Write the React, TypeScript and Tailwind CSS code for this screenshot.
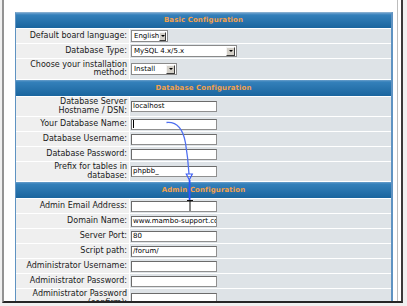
import { ReactNode } from 'react';

const Header = ({ title, tall }: { title: string; tall?: boolean }) => (
  <div
    className={`col-span-2 flex items-center justify-center bg-[linear-gradient(180deg,#6a9fcc_0px,#3480ba_2px,#1a659e_100%)] font-bold text-[7px] tracking-[0.1px] text-[#f2a04c] ${
      tall ? 'h-[16px]' : 'h-[15px]'
    }`}
  >
    {title}
  </div>
);

const Row = ({ label, children, h = 'h-[14px]' }: { label: ReactNode; children: ReactNode; h?: string }) => (
  <>
    <div className={`bg-[#efefef] flex items-center justify-end pr-[2px] text-right text-[8px] leading-[8.5px] text-[#1a1a1a] ${h}`}>
      <span>{label}</span>
    </div>
    <div className="bg-[#dee3e7] flex items-center pl-px">{children}</div>
  </>
);

const TextBox = ({ value, caret }: { value?: string; caret?: boolean }) => (
  <div className="w-[86px] h-[11px] bg-white border border-[#6b6b6b] border-r-[#8f8f8f] border-b-[#8f8f8f] flex items-center pl-px overflow-hidden whitespace-nowrap text-[7px] text-black">
    {caret && <span className="w-px h-[8px] bg-black" />}
    {value}
  </div>
);

const Select = ({ value, w }: { value: string; w: string }) => (
  <div className={`h-[12px] bg-white border border-[#8a8a8a] flex items-center ${w}`}>
    <span className="flex-1 pl-[2px] text-[7px] text-black whitespace-nowrap">{value}</span>
    <span className="w-[9px] h-[9px] mr-px bg-[#d4d0c8] border border-t-[#f4f4f4] border-l-[#f4f4f4] border-r-[#3c3c3c] border-b-[#3c3c3c] flex items-center justify-center">
      <span className="w-0 h-0 border-l-[2px] border-r-[2px] border-t-[2px] border-l-transparent border-r-transparent border-t-black" />
    </span>
  </div>
);

export default function App() {
  return (
    <div className="relative w-[407px] h-[306px] overflow-hidden bg-[#f0f0f0] font-['DejaVu_Sans',Verdana,sans-serif]">
      <div className="ml-[2px] w-[401px] h-[303px] flex bg-white border-l-2 border-l-[#939393] border-r-2 border-r-[#3a3a3a] border-b-2 border-b-[#262626]">
        <div className="flex-1 pl-[11px] pt-[12px] overflow-hidden">
          <div className="w-[378px] border-t border-t-[#85aed0] border-l border-l-[#5f93c2] border-r-2 border-r-[#5f93c2] bg-white grid grid-cols-[113px_1fr] gap-px">
            <Header title="Basic Configuration" />
            <Row label="Default board language:">
              <Select value="English" w="w-[37px]" />
            </Row>
            <Row label="Database Type:">
              <Select value="MySQL 4.x/5.x" w="w-[106px]" />
            </Row>
            <Row label={<>Choose your installation<br />method:</>} h="h-[20px]">
              <Select value="Install" w="w-[46px]" />
            </Row>

            <Header title="Database Configuration" tall />
            <Row label={<>Database Server<br />Hostname / DSN:</>} h="h-[19px]">
              <TextBox value="localhost" />
            </Row>
            <Row label="Your Database Name:">
              <TextBox caret />
            </Row>
            <Row label="Database Username:">
              <TextBox />
            </Row>
            <Row label="Database Password:">
              <TextBox />
            </Row>
            <Row label={<>Prefix for tables in<br />database:</>} h="h-[19px]">
              <TextBox value="phpbb_" />
            </Row>

            <Header title="Admin Configuration" tall />
            <Row label="Admin Email Address:">
              <TextBox />
            </Row>
            <Row label="Domain Name:">
              <TextBox value="www.mambo-support.com" />
            </Row>
            <Row label="Server Port:">
              <TextBox value="80" />
            </Row>
            <Row label="Script path:">
              <TextBox value="/forum/" />
            </Row>
            <Row label="Administrator Username:">
              <TextBox />
            </Row>
            <Row label="Administrator Password:">
              <TextBox />
            </Row>
            <Row label={<>Administrator Password<br />(confirm):</>} h="h-[19px]">
              <TextBox />
            </Row>
          </div>
        </div>
        <div className="w-[4px] border-l border-l-[#bdbdbd]" />
      </div>

      {/* annotation arrow + text cursor */}
      <svg className="absolute left-0 top-0 pointer-events-none" width="407" height="306">
        <path d="M166.5 122.5 C177 121.5 183 129 185.5 143 C187.5 155 188.5 166 189 174" fill="none" stroke="#4f6ff0" strokeWidth="1.3" />
        <path d="M186.3 174 L192.3 174 L189.3 180 Z" fill="none" stroke="#3d5ff5" strokeWidth="1.2" />
        <path d="M189.6 180 V200" stroke="#2f54ff" strokeWidth="1.8" />
        <path d="M187 200.5 H193 M190 200.5 V211" stroke="#111" strokeWidth="1" />
      </svg>
    </div>
  );
}
